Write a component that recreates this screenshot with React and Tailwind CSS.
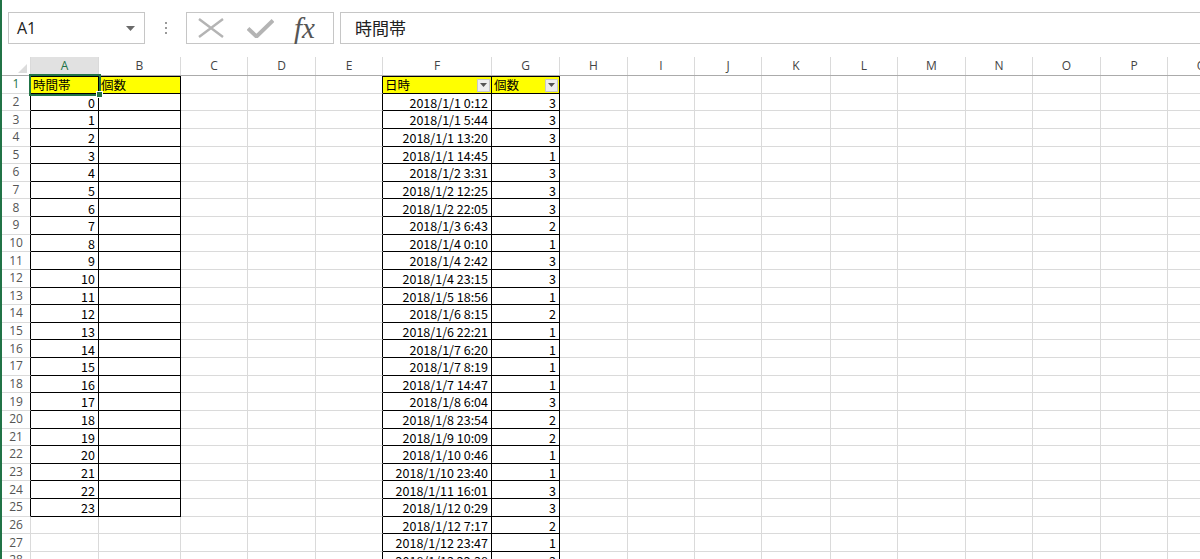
import React from "react";

const COLS = [
  { key: "A", w: 68 },
  { key: "B", w: 82 },
  { key: "C", w: 67 },
  { key: "D", w: 68 },
  { key: "E", w: 67 },
  { key: "F", w: 109 },
  { key: "G", w: 68 },
  { key: "H", w: 68 },
  { key: "I", w: 67 },
  { key: "J", w: 67 },
  { key: "K", w: 69 },
  { key: "L", w: 67 },
  { key: "M", w: 68 },
  { key: "N", w: 67 },
  { key: "O", w: 68 },
  { key: "P", w: 67 },
  { key: "Q", w: 68 },
];

const LOG = [
  ["2018/1/1 0:12", 3],
  ["2018/1/1 5:44", 3],
  ["2018/1/1 13:20", 3],
  ["2018/1/1 14:45", 1],
  ["2018/1/2 3:31", 3],
  ["2018/1/2 12:25", 3],
  ["2018/1/2 22:05", 3],
  ["2018/1/3 6:43", 2],
  ["2018/1/4 0:10", 1],
  ["2018/1/4 2:42", 3],
  ["2018/1/4 23:15", 3],
  ["2018/1/5 18:56", 1],
  ["2018/1/6 8:15", 2],
  ["2018/1/6 22:21", 1],
  ["2018/1/7 6:20", 1],
  ["2018/1/7 8:19", 1],
  ["2018/1/7 14:47", 1],
  ["2018/1/8 6:04", 3],
  ["2018/1/8 23:54", 2],
  ["2018/1/9 10:09", 2],
  ["2018/1/10 0:46", 1],
  ["2018/1/10 23:40", 1],
  ["2018/1/11 16:01", 3],
  ["2018/1/12 0:29", 3],
  ["2018/1/12 7:17", 2],
  ["2018/1/12 23:47", 1],
  ["2018/1/13 22:38", 3],
];

const ROWS = Array.from({ length: 28 }, (_, i) => i + 1);

// which cells belong to a bordered table
function inTable(row, col) {
  if ((col === "A" || col === "B") && row <= 25) return true;
  if ((col === "F" || col === "G") && row <= LOG.length + 1) return true;
  return false;
}

function cellValue(row, col) {
  if (row === 1) {
    if (col === "A") return "時間帯";
    if (col === "B") return "個数";
    if (col === "F") return "日時";
    if (col === "G") return "個数";
    return null;
  }
  if (col === "A" && row <= 25) return String(row - 2);
  const item = LOG[row - 2];
  if (item && col === "F") return item[0];
  if (item && col === "G") return String(item[1]);
  return null;
}

function FilterButton() {
  return (
    <div className="ml-auto mr-[1px] mb-[1px] flex h-[13px] w-[13px] items-center justify-center border border-[#c8c8c8] bg-[#eeeeee]">
      <svg width="7" height="4" viewBox="0 0 7 4">
        <path d="M0 0h7L3.5 4z" fill="#555" />
      </svg>
    </div>
  );
}

function Cell({ row, col, w }) {
  const table = inTable(row, col.key);
  const next = COLS[COLS.findIndex((c) => c.key === col.key) + 1];
  const blackRight = table || (next && inTable(row, next.key));
  const value = cellValue(row, col.key);
  const header = row === 1 && table;
  const filter = header && (col.key === "F" || col.key === "G");
  const active = row === 1 && col.key === "A";

  return (
    <div
      className={`relative flex h-full shrink-0 items-end border-b ${
        table ? "border-b-black" : "border-b-[#dadada]"
      } ${blackRight ? "border-r border-r-black" : "border-r border-r-[#dadada]"} ${
        header ? "bg-[#ffff00] shadow-[inset_0_1px_0_#000]" : "bg-white"
      } ${active ? "z-10 outline-2 outline-offset-0 outline-[#217346]" : ""}`}
      style={{ width: w }}
    >
      {value !== null && (
        <span
          className={`whitespace-nowrap pb-[1px] text-[12.5px] leading-none text-black ${
            header ? "pl-[2px]" : "ml-auto pr-[3px]"
          }`}
        >
          {value}
        </span>
      )}
      {filter && <FilterButton />}
      {active && (
        <div className="absolute bottom-[-5px] right-[-5px] h-[7px] w-[7px] border border-white bg-[#217346]" />
      )}
    </div>
  );
}

export default function App() {
  return (
    <div
      className="flex h-[559px] w-[1200px] overflow-hidden bg-white"
      style={{ fontFamily: '"Noto Sans CJK JP", "Noto Sans", sans-serif' }}
    >
      <div className="w-[2px] shrink-0 bg-[#217346]" />
      <div className="flex min-w-0 flex-1 flex-col">
        {/* formula bar */}
        <div className="flex h-[57px] shrink-0 items-start pt-[12px]">
          <div className="ml-[6px] flex h-[32px] w-[137px] items-center border border-[#c6c6c6] pl-[8px] pr-[9px]">
            <span
              className="text-[16px] text-[#222]"
              style={{ fontFamily: '"Open Sans", "Liberation Sans", sans-serif' }}
            >
              A1
            </span>
            <svg className="ml-auto" width="9" height="5" viewBox="0 0 9 5">
              <path d="M0 0h9L4.5 5z" fill="#6a6a6a" />
            </svg>
          </div>
          <div className="flex h-[32px] w-[41px] flex-col items-center justify-center gap-[3px]">
            <div className="h-[2px] w-[2px] bg-[#9a9a9a]" />
            <div className="h-[2px] w-[2px] bg-[#9a9a9a]" />
            <div className="h-[2px] w-[2px] bg-[#9a9a9a]" />
          </div>
          <div className="flex h-[32px] w-[148px] items-center border border-[#c6c6c6] pl-[11px]">
            <svg width="26" height="20" viewBox="0 0 26 20">
              <path d="M1 1L25 19M25 1L1 19" stroke="#b4b4b4" strokeWidth="2.4" fill="none" />
            </svg>
            <svg className="ml-[23px]" width="27" height="19" viewBox="0 0 27 19">
              <path d="M1 9.5L9.5 17.5L26 1.5" stroke="#b4b4b4" strokeWidth="4" fill="none" />
            </svg>
            <span
              className="ml-[20px] text-[29px] italic leading-none text-[#555]"
              style={{ fontFamily: '"Liberation Serif", serif' }}
            >
              fx
            </span>
          </div>
          <div className="ml-[6px] flex h-[32px] flex-1 items-center border border-r-0 border-[#c6c6c6] pl-[14px]">
            <span className="text-[17px] text-[#222]">時間帯</span>
          </div>
        </div>

        {/* column headers */}
        <div
          className="flex h-[19px] shrink-0 border-b border-[#ababab] text-[12px] text-[#444]"
          style={{ fontFamily: '"Open Sans", "Liberation Sans", sans-serif' }}
        >
          <div className="relative w-[29px] shrink-0 border-r border-[#dadada] bg-white">
            <svg className="absolute bottom-[2px] right-[3px]" width="9" height="9" viewBox="0 0 9 9">
              <path d="M9 0V9H0z" fill="#dcdcdc" />
            </svg>
          </div>
          {COLS.map((c) => (
            <div
              key={c.key}
              className={`flex h-full shrink-0 items-center justify-center border-r border-[#dadada] ${
                c.key === "A" ? "bg-[#e1e1e1] text-[#217346]" : "bg-white"
              }`}
              style={{ width: c.w }}
            >
              {c.key}
            </div>
          ))}
        </div>

        {/* grid */}
        <div className="flex flex-col">
          {ROWS.map((r) => (
            <div key={r} className="flex h-[17.625px] shrink-0">
              <div
                className={`flex w-[29px] shrink-0 items-center justify-center border-b border-r border-b-[#dadada] ${
                  r <= 25 ? "border-r-black" : "border-r-[#dadada]"
                } text-[12px] ${r === 1 ? "text-[#217346]" : "text-[#555]"}`}
                style={{ fontFamily: '"Open Sans", "Liberation Sans", sans-serif' }}
              >
                {r}
              </div>
              {COLS.map((c) => (
                <Cell key={c.key} row={r} col={c} w={c.w} />
              ))}
            </div>
          ))}
        </div>
      </div>
    </div>
  );
}
